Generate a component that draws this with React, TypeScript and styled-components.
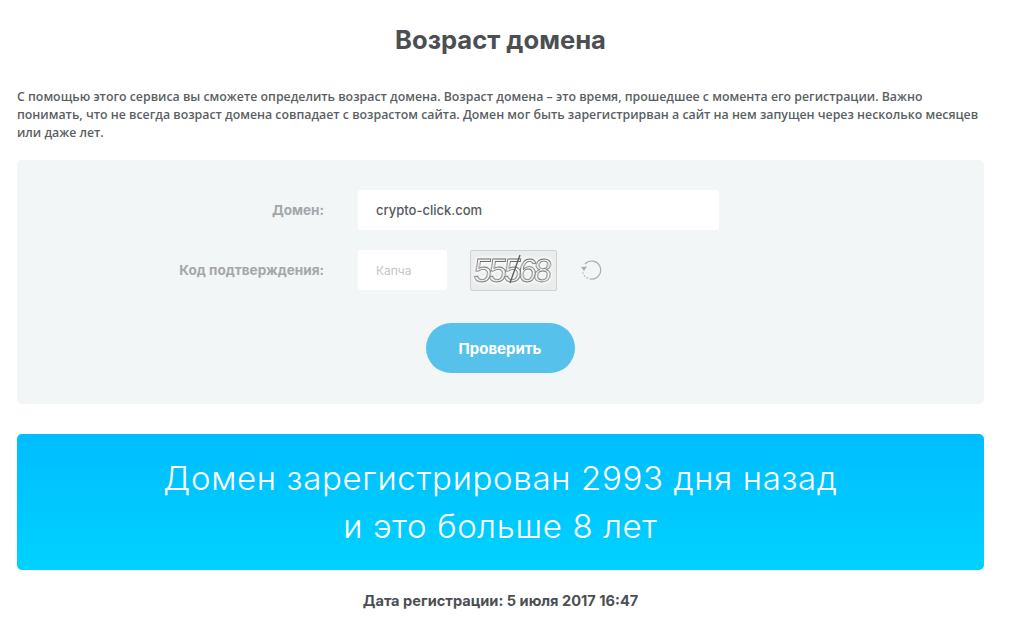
import React from "react";
import styled, { createGlobalStyle } from "styled-components";

const Global = createGlobalStyle`
  html, body { margin: 0; padding: 0; background: #fff; }
  body { font-family: "Open Sans", "Noto Sans", sans-serif; color: #4a4f55; }
`;

const display = `Inter, "Open Sans", sans-serif`;

const Page = styled.main`
  width: 967px;
  margin-left: 17px;
  display: flex;
  flex-direction: column;
`;

const Title = styled.h1`
  margin: 24px 0 0;
  height: 32px;
  line-height: 32px;
  font-family: ${display};
  font-size: 25.6px;
  font-weight: 700;
  text-align: center;
  color: #4b4f54;
`;

const Intro = styled.p`
  margin: 32px 0 0;
  font-size: 12.33px;
  line-height: 18px;
  font-weight: 600;
  color: #5a5f64;
  height: 54px;
  white-space: nowrap;
`;

const Panel = styled.form`
  margin-top: 18px;
  height: 244px;
  box-sizing: border-box;
  padding-top: 30px;
  background: #f3f6f7;
  border-radius: 5px;
  display: flex;
  flex-direction: column;
`;

const Row = styled.div`
  display: flex;
  align-items: center;
  height: 40px;
  margin-bottom: 20px;
`;

const Label = styled.label`
  width: 307px;
  text-align: right;
  margin-right: 34px;
  font-family: ${display};
  font-size: 13.55px;
  font-weight: 700;
  color: #a4a7a9;
  white-space: nowrap;
`;

const Field = styled.div<{ $w: number; $muted?: boolean }>`
  width: ${(p) => p.$w}px;
  height: 40px;
  box-sizing: border-box;
  background: #fff;
  border-radius: 3px;
  padding-left: 18px;
  display: flex;
  align-items: center;
  font-family: ${display};
  font-size: ${(p) => (p.$muted ? 12 : 13)}px;
  font-weight: ${(p) => (p.$muted ? 400 : 500)};
  color: ${(p) => (p.$muted ? "#c3c6c9" : "#55595e")};
`;

const Captcha = styled.svg`
  margin-left: 23px;
  width: 87px;
  height: 41px;
  box-sizing: border-box;
  border: 1px solid #cfd1d2;
  border-radius: 2px;
  background: #ebeded;
`;

const CaptchaText = styled.text`
  font-family: "Liberation Sans", sans-serif;
  font-size: 33px;
  letter-spacing: -3.4px;
  fill: #f9f9f9;
  stroke: #626465;
  stroke-width: 0.8px;
  filter: drop-shadow(0 0 1.5px #fff) drop-shadow(0 0 1.5px #fff);
`;

const Refresh = styled.svg`
  margin-left: 23px;
  width: 22px;
  height: 22px;
`;

const Submit = styled.button`
  align-self: center;
  margin-top: 13px;
  margin-right: 1px;
  width: 149px;
  height: 50px;
  border: 0;
  border-radius: 25px;
  background: #56c2ec;
  color: #fff;
  font-family: ${display};
  font-size: 15px;
  font-weight: 700;
`;

const Result = styled.section`
  margin-top: 30px;
  height: 136px;
  box-sizing: border-box;
  padding-top: 20px;
  border-radius: 5px;
  background: linear-gradient(180deg, #00bdff 0%, #00d2ff 100%);
  color: #fff;
  text-align: center;
  font-family: ${display};
  font-size: 33px;
  line-height: 48px;
  font-weight: 300;
  letter-spacing: 0.65px;
`;

const RegDate = styled.p`
  margin: 22px 0 0;
  font-family: ${display};
  font-size: 14.6px;
  line-height: 18px;
  font-weight: 700;
  text-align: center;
  color: #4b4f54;
`;

export default function App() {
  return (
    <>
      <Global />
      <Page>
        <Title>Возраст домена</Title>
        <Intro>
          С помощью этого сервиса вы сможете определить возраст домена. Возраст домена – это время, прошедшее с момента его регистрации. Важно
          <br />
          понимать, что не всегда возраст домена совпадает с возрастом сайта. Домен мог быть зарегистрирван а сайт на нем запущен через несколько месяцев
          <br />
          или даже лет.
        </Intro>
        <Panel>
          <Row>
            <Label>Домен:</Label>
            <Field $w={361}>crypto-click.com</Field>
          </Row>
          <Row>
            <Label>Код подтверждения:</Label>
            <Field $w={89} $muted>Капча</Field>
            <Captcha viewBox="0 0 85 39">
              <CaptchaText x="2" y="31" transform="skewX(-6) translate(3 0)">55568</CaptchaText>
              <path d="M39 32 L49 4" stroke="#5a5a5a" strokeWidth="1.3" />
            </Captcha>
            <Refresh viewBox="0 0 22 22" fill="none">
              <path d="M5 5 A9 9 0 1 1 11 20" stroke="#a9adaf" strokeWidth="1.2" />
              <path d="M11 20 A9 9 0 0 1 2.4 12" stroke="#a9adaf" strokeWidth="1.2" strokeDasharray="1.5 1.8" />
              <path d="M1 8 L7 7.5 L4 12 Z" fill="#a9adaf" />
            </Refresh>
          </Row>
          <Submit type="button">Проверить</Submit>
        </Panel>
        <Result>
          Домен зарегистрирован 2993 дня назад
          <br />
          и это больше 8 лет
        </Result>
        <RegDate>Дата регистрации: 5 июля 2017 16:47</RegDate>
      </Page>
    </>
  );
}
